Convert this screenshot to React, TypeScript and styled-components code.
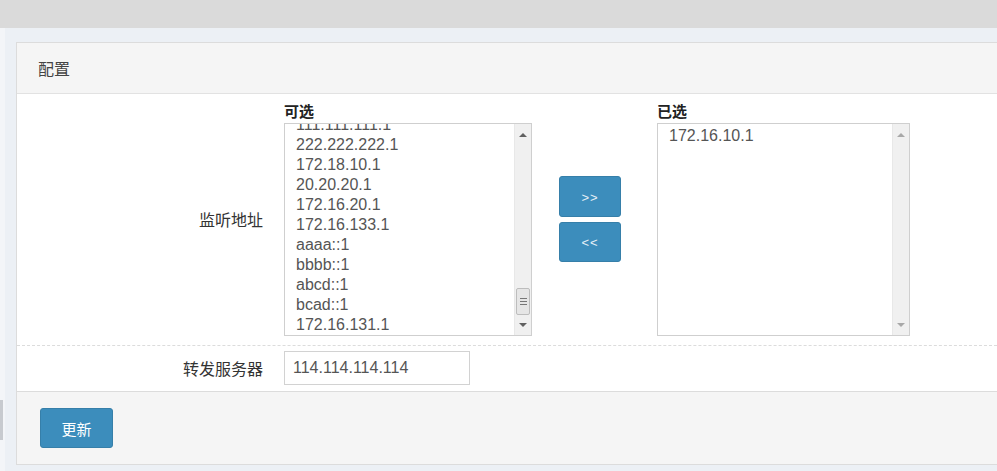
import React from 'react';
import styled, { createGlobalStyle } from 'styled-components';

const GlobalStyle = createGlobalStyle`
  html, body {
    margin: 0;
    padding: 0;
    background: #ecf0f5;
    overflow: hidden;
  }
  body {
    font-family: 'Liberation Sans', 'Noto Sans CJK SC', sans-serif;
    font-size: 14px;
    color: #333;
  }
`;

const cjk = `'Noto Sans CJK SC', 'Liberation Sans', sans-serif`;

const TopBar = styled.div`
  height: 28px;
  background: #dadada;
`;

const Main = styled.div`
  display: flex;
  height: 443px;
`;

const SideEdge = styled.div`
  width: 5px;
  flex: none;
  background: #f3f5f8;
  padding-top: 372px;
  box-sizing: border-box;
`;

const EdgeThumb = styled.div`
  width: 3px;
  height: 40px;
  background: #c7cacf;
`;

const Content = styled.div`
  flex: 1;
  padding: 14px 0 0 11px;
  min-width: 0;
`;

const Panel = styled.div`
  background: #fff;
  border: 1px solid #dcdcdc;
  border-right: none;
`;

const PanelHeader = styled.div`
  height: 50px;
  display: flex;
  align-items: center;
  padding-left: 21px;
  background: #f5f5f5;
  border-bottom: 1px solid #e2e2e2;
  font-family: ${cjk};
  font-size: 16px;
  color: #444;
`;

const FormRow = styled.div<{ $dashed?: boolean }>`
  display: grid;
  grid-template-columns: 267px 1fr;
  align-items: center;
  border-top: ${(p) => (p.$dashed ? '1px dashed #dcdcdc' : 'none')};
  padding: ${(p) => (p.$dashed ? '5px 0 6px' : '7px 0 9px')};
`;

const Label = styled.div`
  text-align: right;
  padding-right: 21px;
  font-family: ${cjk};
  font-size: 16px;
  color: #333;
`;

const Picker = styled.div`
  display: flex;
  align-items: center;
`;

const ListColumn = styled.div<{ $width: number }>`
  width: ${(p) => p.$width}px;
  display: flex;
  flex-direction: column;
`;

const ListTitle = styled.div`
  font-family: ${cjk};
  font-weight: bold;
  font-size: 15px;
  line-height: 20px;
  margin-bottom: 2px;
  color: #222;
`;

const ListBox = styled.div`
  height: 213px;
  border: 1px solid #cfcfcf;
  box-sizing: border-box;
  display: flex;
  background: #fff;
`;

const ListView = styled.div`
  flex: 1;
  overflow: hidden;
`;

const Items = styled.div<{ $offset: number }>`
  margin-top: ${(p) => p.$offset}px;
  padding-left: 11px;
`;

const Item = styled.div`
  height: 20px;
  line-height: 20px;
  font-size: 16px;
  color: #555;
  white-space: nowrap;
`;

const ScrollBar = styled.div`
  width: 17px;
  flex: none;
  background: #f0f0f0;
  border-left: 1px solid #e8e8e8;
  display: flex;
  flex-direction: column;
  align-items: center;
  justify-content: space-between;
  padding: 9px 0 8px;
  box-sizing: border-box;
`;

const Track = styled.div`
  flex: 1;
  width: 100%;
  display: flex;
  flex-direction: column;
  justify-content: flex-end;
  padding: 0 1px 8px;
  box-sizing: border-box;
`;

const Thumb = styled.div`
  height: 25px;
  border: 1px solid #bdbdbd;
  border-radius: 2px;
  background: #e6e6e6;
  display: flex;
  flex-direction: column;
  align-items: center;
  justify-content: center;
  gap: 2px;
`;

const Grip = styled.span`
  width: 7px;
  height: 1px;
  background: #777;
`;

const Arrow = styled.span<{ $down?: boolean; $dim?: boolean }>`
  width: 0;
  height: 0;
  border-left: 4px solid transparent;
  border-right: 4px solid transparent;
  ${(p) =>
    p.$down
      ? `border-top: 4px solid ${p.$dim ? '#a8a8a8' : '#606060'};`
      : `border-bottom: 4px solid ${p.$dim ? '#a8a8a8' : '#606060'};`}
`;

const MoveButtons = styled.div`
  display: flex;
  flex-direction: column;
  gap: 5px;
  margin: 0 36px 0 27px;
`;

const BlueButton = styled.button<{ $w: number; $h: number; $size: number }>`
  width: ${(p) => p.$w}px;
  height: ${(p) => p.$h}px;
  background: #3c8dbc;
  border: 1px solid #367fa9;
  border-radius: 3px;
  color: #fff;
  font-family: ${cjk};
  font-size: ${(p) => p.$size}px;
  padding: 0;
  cursor: pointer;
`;

const ArrowLabel = styled.span`
  font-family: 'Liberation Sans', sans-serif;
  font-size: 13px;
  letter-spacing: 1px;
  color: #e6f0f7;
`;

const TextInput = styled.input`
  width: 186px;
  height: 34px;
  box-sizing: border-box;
  border: 1px solid #d2d2d2;
  padding: 0 8px;
  font-family: 'Liberation Sans', sans-serif;
  font-size: 16px;
  color: #555;
  outline: none;
`;

const PanelFooter = styled.div`
  background: #f5f5f5;
  border-top: 1px solid #dcdcdc;
  padding: 16px 0 16px 23px;
`;

const available = [
  '111.111.111.1',
  '222.222.222.1',
  '172.18.10.1',
  '20.20.20.1',
  '172.16.20.1',
  '172.16.133.1',
  'aaaa::1',
  'bbbb::1',
  'abcd::1',
  'bcad::1',
  '172.16.131.1',
];

const selected = ['172.16.10.1'];

const Scroller = ({ thumb, dim }: { thumb?: boolean; dim?: boolean }) => (
  <ScrollBar>
    <Arrow $dim={dim} />
    <Track>
      {thumb && (
        <Thumb>
          <Grip />
          <Grip />
          <Grip />
        </Thumb>
      )}
    </Track>
    <Arrow $down $dim={dim} />
  </ScrollBar>
);

const App = () => {
  return (
    <>
      <GlobalStyle />
      <TopBar />
      <Main>
        <SideEdge>
          <EdgeThumb />
        </SideEdge>
        <Content>
          <Panel>
            <PanelHeader>配置</PanelHeader>
            <FormRow>
              <Label>监听地址</Label>
              <Picker>
                <ListColumn $width={248}>
                  <ListTitle>可选</ListTitle>
                  <ListBox>
                    <ListView>
                      <Items $offset={-9}>
                        {available.map((a) => (
                          <Item key={a}>{a}</Item>
                        ))}
                      </Items>
                    </ListView>
                    <Scroller thumb />
                  </ListBox>
                </ListColumn>
                <MoveButtons>
                  <BlueButton $w={62} $h={41} $size={13}>
                    <ArrowLabel>&gt;&gt;</ArrowLabel>
                  </BlueButton>
                  <BlueButton $w={62} $h={40} $size={13}>
                    <ArrowLabel>&lt;&lt;</ArrowLabel>
                  </BlueButton>
                </MoveButtons>
                <ListColumn $width={253}>
                  <ListTitle>已选</ListTitle>
                  <ListBox>
                    <ListView>
                      <Items $offset={2}>
                        {selected.map((a) => (
                          <Item key={a}>{a}</Item>
                        ))}
                      </Items>
                    </ListView>
                    <Scroller dim />
                  </ListBox>
                </ListColumn>
              </Picker>
            </FormRow>
            <FormRow $dashed>
              <Label>转发服务器</Label>
              <div>
                <TextInput defaultValue="114.114.114.114" />
              </div>
            </FormRow>
            <PanelFooter>
              <BlueButton $w={73} $h={40} $size={15}>更新</BlueButton>
            </PanelFooter>
          </Panel>
        </Content>
      </Main>
    </>
  );
};

export default App;
